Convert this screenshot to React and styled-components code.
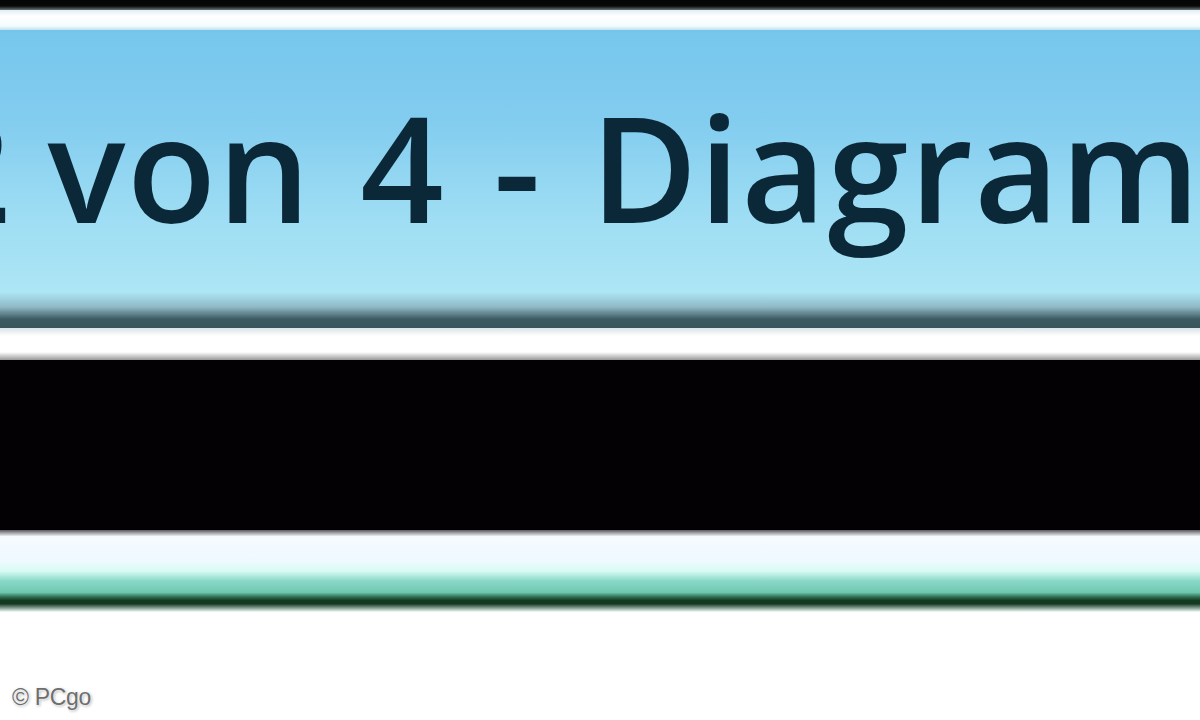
import React from "react";
import styled, { createGlobalStyle } from "styled-components";

const GlobalStyle = createGlobalStyle`
  html, body {
    margin: 0;
    padding: 0;
    background: #ffffff;
  }
  #root {
    width: 1200px;
    height: 720px;
    overflow: hidden;
  }
`;

const Page = styled.div`
  width: 1200px;
  height: 720px;
  display: flex;
  flex-direction: column;
  background: #ffffff;
  overflow: hidden;
`;

const Strip = styled.div`
  flex: 0 0 ${props => props.height}px;
  background: ${props => props.bg};
`;

const TitleBar = styled.div`
  flex: 0 0 298px;
  display: flex;
  align-items: flex-start;
  overflow: hidden;
  background: linear-gradient(
    to bottom,
    #76c6ec 0%,
    #82ccef 30%,
    #9cdcf3 60%,
    #ade6f5 88%,
    #8fb8c4 93%,
    #3c5a62 97%,
    #3a555c 100%
  );
`;

const Title = styled.h1`
  margin: 57px 0 0 -72px;
  font-family: "Open Sans", "Liberation Sans", sans-serif;
  font-weight: 600;
  font-size: 146px;
  line-height: 1.1;
  letter-spacing: 1.5px;
  word-spacing: 9px;
  color: #0b2838;
  white-space: nowrap;
`;

const Count = styled.span`
  margin-right: -14px;
`;

const Band = styled.div`
  flex: 0 0 ${props => props.height}px;
  background: ${props => props.bg};
`;

const Footer = styled.div`
  flex: 1;
  display: flex;
  align-items: flex-end;
  padding: 0 0 9px 12px;
`;

const Credit = styled.span`
  font-family: "Liberation Sans", Arial, sans-serif;
  font-size: 23px;
  letter-spacing: -0.3px;
  color: #6e6e6e;
  text-shadow: 0 0 2px #fff, 0 0 3px #fff, 1px 1px 3px #999;
`;

export default function App() {
  return (
    <>
      <GlobalStyle />
      <Page>
        <Strip height={10} bg="linear-gradient(#050505 0%, #080808 60%, #6a7478 100%)" />
        <Strip height={20} bg="linear-gradient(#dfeff2 0%, #ffffff 30%, #f4fcff 80%, #bfe2ee 100%)" />
        <TitleBar>
          <Title>
            <Count>2</Count> von 4 - Diagramme
          </Title>
        </TitleBar>
        <Strip height={32} bg="linear-gradient(#d8e4e6 0%, #ffffff 25%, #ffffff 75%, #9a9898 100%)" />
        <Band height={170} bg="#040104" />
        <Strip height={82} bg="linear-gradient(#5a5a5e 0%, #f6fbff 8%, #eef9ff 38%, #d8fbf4 50%, #8ad8c8 62%, #70c8b0 76%, #2a6a4a 82%, #123a22 86%, #123a22 90%, #f4fffc 100%)" />
        <Footer>
          <Credit>© PCgo</Credit>
        </Footer>
      </Page>
    </>
  );
}
